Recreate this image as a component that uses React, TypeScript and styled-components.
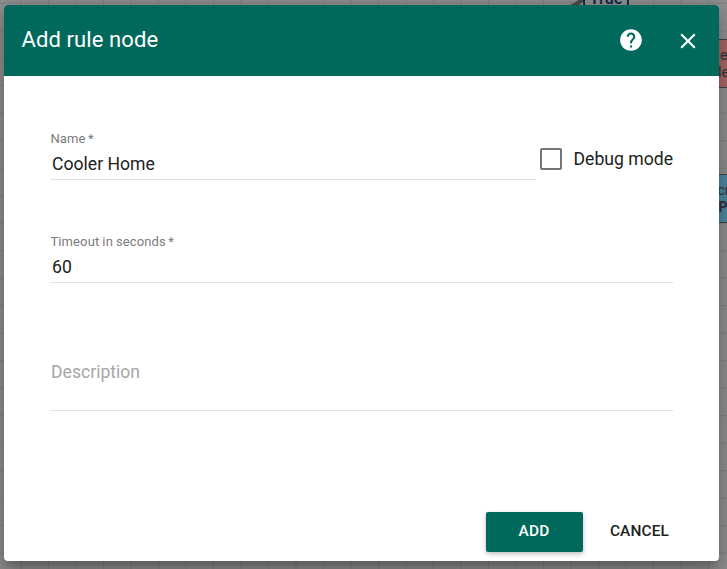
import React from 'react';
import styled, { createGlobalStyle } from 'styled-components';

const GlobalStyle = createGlobalStyle`
  * { box-sizing: border-box; }
  body { margin: 0; font-family: Roboto, sans-serif; color: #212121; overflow: hidden; }
`;

const Page = styled.main`
  position: relative;
  height: 569px;
  padding: 5px 8px 8px 4px;
  overflow: hidden;
  background-color: #8e8e8e;
  background-image:
    linear-gradient(90deg, rgba(0, 0, 0, 0.09) 1px, transparent 1px),
    linear-gradient(rgba(0, 0, 0, 0.09) 1px, transparent 1px);
  background-size: 27.5px 27.5px;
  background-position: 20.5px 2.7px;
`;

const RuleNode = styled.div<{ $top: number; $color: string }>`
  position: absolute;
  left: 640px;
  top: ${(p) => p.$top}px;
  width: 120px;
  height: 49px;
  padding: 7px 0 0 60px;
  border: 1px solid #444;
  background: ${(p) => p.$color};
  color: #303438;
  font-size: 14px;
  line-height: 17px;
  white-space: nowrap;
`;

const NodeTitle = styled.div<{ $shift: number; $bold?: boolean }>`
  margin-left: ${(p) => p.$shift}px;
  font-weight: ${(p) => (p.$bold ? 700 : 400)};
`;

const LinkLabel = styled.div`
  position: absolute;
  left: 583px;
  top: -19px;
  width: 46px;
  height: 28px;
  border: 2px solid #142c4c;
  border-radius: 6px;
  background: #8e8e8e;
  color: #142c4c;
  font-size: 16px;
  font-weight: 700;
  line-height: 31px;
  text-align: center;
`;

const LinkLine = styled.svg`
  position: absolute;
  left: 566px;
  top: 0;
`;

const Dialog = styled.section`
  position: relative;
  display: flex;
  flex-direction: column;
  height: 556px;
  border-radius: 4px;
  overflow: hidden;
  background: #fff;
  box-shadow: 0 7px 8px -4px rgba(0, 0, 0, 0.2), 0 13px 19px 2px rgba(0, 0, 0, 0.14),
    0 5px 24px 4px rgba(0, 0, 0, 0.12);
`;

const Header = styled.header`
  display: flex;
  align-items: center;
  flex: 0 0 71px;
  padding: 0 18px;
  background: #00695c;
  color: #fff;
`;

const Title = styled.h1`
  flex: 1;
  margin: 0 0 2px -0.5px;
  font-size: 22px;
  font-weight: 400;
  line-height: 30px;
  letter-spacing: 0.1px;
`;

const IconButton = styled.button<{ $gap?: number; $raise?: number }>`
  display: flex;
  padding: 0;
  margin: 0 0 ${(p) => p.$raise ?? 0}px ${(p) => p.$gap ?? 0}px;
  border: 0;
  background: none;
  color: inherit;
`;

const Form = styled.form`
  flex: 1;
  padding: 52px 46px 0;
`;

const FirstRow = styled.div`
  display: flex;
  justify-content: space-between;
`;

const Field = styled.label<{ $width?: number; $top?: number }>`
  display: flex;
  flex-direction: column;
  width: ${(p) => (p.$width ? `${p.$width}px` : '100%')};
  height: 52px;
  margin-top: ${(p) => p.$top ?? 0}px;
  border-bottom: 1px solid #e0e0e0;
`;

const Caption = styled.span`
  flex: 0 0 21px;
  padding: 1px 0 0 0.5px;
  color: #7b7b7b;
  font-size: 13px;
  line-height: 20px;
  letter-spacing: 0.1px;
  word-spacing: -0.2px;
`;

const Required = styled.span`
  margin-left: 2.5px;
`;

const Value = styled.input`
  width: 100%;
  height: 30px;
  padding: 0 2px;
  border: 0;
  outline: 0;
  background: none;
  color: #212121;
  font: 400 17.6px/30px Roboto, sans-serif;
`;

const Description = styled.textarea`
  display: block;
  width: 100%;
  height: 54px;
  margin-top: 74px;
  padding: 0 1px;
  border: 0;
  border-bottom: 1px solid #e0e0e0;
  outline: 0;
  resize: none;
  font: 400 17.6px/30px Roboto, sans-serif;
  &::placeholder { color: #a6a6a6; opacity: 1; }
`;

const CheckLabel = styled.label`
  display: flex;
  align-items: center;
  gap: 12px;
  height: 22px;
  margin-top: 20px;
  font-size: 17.6px;
  white-space: nowrap;
`;

const CheckBox = styled.input`
  appearance: none;
  width: 22px;
  height: 22px;
  margin: 0;
  border: 2px solid #757575;
  border-radius: 2px;
`;

const Actions = styled.footer`
  display: flex;
  justify-content: flex-end;
  gap: 12px;
  padding: 0 34px 9px 0;
`;

const Button = styled.button<{ $primary?: boolean }>`
  width: ${(p) => (p.$primary ? 97 : 90)}px;
  height: 40px;
  padding: 0 1px 2px 0;
  border: 0;
  border-radius: 2px;
  background: ${(p) => (p.$primary ? '#00695c' : 'transparent')};
  box-shadow: ${(p) => (p.$primary ? '0 2px 5px rgba(0, 0, 0, 0.26)' : 'none')};
  color: ${(p) => (p.$primary ? '#fff' : '#212121')};
  font: 500 15.4px Roboto, sans-serif;
  letter-spacing: 0.15px;
`;

export default function App() {
  return (
    <Page>
      <GlobalStyle />
      <LinkLine width="30" height="10" viewBox="0 0 30 10">
        <path d="M3 6 14 -1H20L12 6Z" fill="#4a4a4a" />
      </LinkLine>
      <LinkLabel>True</LinkLabel>
      <RuleNode $top={39} $color="#a86664">
        <NodeTitle $shift={19}>entity</NodeTitle>
        <NodeTitle $shift={17}>led</NodeTitle>
      </RuleNode>
      <RuleNode $top={174} $color="#4c88a0">
        <NodeTitle $shift={16.5}>create</NodeTitle>
        <NodeTitle $shift={17.5} $bold>Post</NodeTitle>
      </RuleNode>
      <Dialog>
        <Header>
          <Title>Add rule node</Title>
          <IconButton type="button" aria-label="Help" $raise={2}>
            <svg width="26" height="26" viewBox="0 0 24 24" fill="currentColor">
              <path d="M12 2C6.48 2 2 6.48 2 12s4.48 10 10 10 10-4.48 10-10S17.52 2 12 2zm1 17h-2v-2h2v2zm2.07-7.75-.9.92C13.45 12.9 13 13.5 13 15h-2v-.5c0-1.1.45-2.1 1.17-2.83l1.24-1.26c.37-.36.59-.86.59-1.41 0-1.1-.9-2-2-2s-2 .9-2 2H8c0-2.21 1.79-4 4-4s4 1.79 4 4c0 .88-.36 1.68-.93 2.25z" />
            </svg>
          </IconButton>
          <IconButton type="button" aria-label="Close" $gap={31}>
            <svg width="26" height="26" viewBox="0 0 24 24" fill="currentColor">
              <path d="M19 6.41 17.59 5 12 10.59 6.41 5 5 6.41 10.59 12 5 17.59 6.41 19 12 13.41 17.59 19 19 17.59 13.41 12z" />
            </svg>
          </IconButton>
        </Header>
        <Form>
          <FirstRow>
            <Field $width={486}>
              <Caption>Name<Required>*</Required></Caption>
              <Value defaultValue="Cooler Home" />
            </Field>
            <CheckLabel>
              <CheckBox type="checkbox" />
              Debug mode
            </CheckLabel>
          </FirstRow>
          <Field $top={51}>
            <Caption>Timeout in seconds<Required>*</Required></Caption>
            <Value defaultValue="60" />
          </Field>
          <Description placeholder="Description" />
        </Form>
        <Actions>
          <Button type="button" $primary>ADD</Button>
          <Button type="button">CANCEL</Button>
        </Actions>
      </Dialog>
    </Page>
  );
}
